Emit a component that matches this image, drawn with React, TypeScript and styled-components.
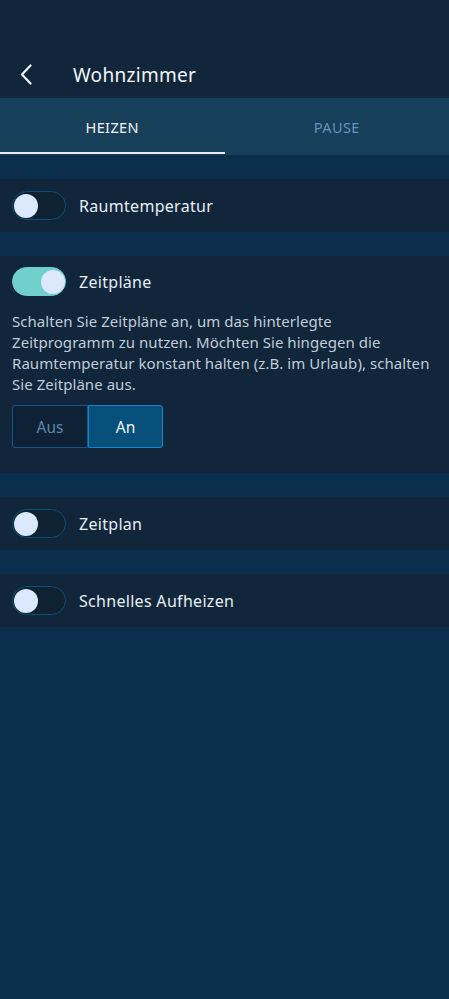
import React, { useState } from "react";
import styled, { createGlobalStyle } from "styled-components";

const Global = createGlobalStyle`
  html, body { margin: 0; padding: 0; background: #0a2e4c; }
  body { font-family: "Noto Sans", "Open Sans", sans-serif; -webkit-font-smoothing: antialiased; }
  * { box-sizing: border-box; }
`;

const Page = styled.div`
  width: 449px;
  min-height: 999px;
  background: #0a2e4c;
  display: flex;
  flex-direction: column;
`;

const Header = styled.header`
  height: 98px;
  background: #11263b;
  display: flex;
  align-items: flex-end;
  padding: 0 0 10px 20px;
`;

const BackButton = styled.button`
  width: 12px;
  height: 22px;
  padding: 0;
  border: 0;
  background: none;
  display: flex;
  align-items: center;
  margin-right: 41px;
  margin-bottom: 3px;
`;

const Title = styled.h1`
  margin: 0;
  font-size: 19px;
  font-weight: 400;
  color: #f2f5f8;
  line-height: 26px;
  letter-spacing: 0.3px;
`;

const Tabs = styled.nav`
  height: 57px;
  background: #173f59;
  display: flex;
`;

const Tab = styled.div<{ $active?: boolean }>`
  flex: 1;
  display: flex;
  align-items: center;
  justify-content: center;
  position: relative;
  font-size: 14.5px;
  letter-spacing: 0.4px;
  color: ${(p) => (p.$active ? "#f2f5f8" : "#6592b9")};
  padding-top: 1px;
  &::after {
    content: "";
    display: ${(p) => (p.$active ? "block" : "none")};
    position: absolute;
    left: 0;
    right: 0;
    bottom: 1px;
    height: 2px;
    background: #e6ecf2;
  }
`;

const List = styled.div`
  display: flex;
  flex-direction: column;
  gap: 24px;
  padding-top: 24px;
`;

const Row = styled.section`
  background: #11263a;
  min-height: 53px;
  padding: 0 12px;
  display: flex;
  align-items: center;
  gap: 13px;
`;

const Card = styled.section`
  background: #11263a;
  padding: 11px 12px 25px;
  display: flex;
  flex-direction: column;
`;

const CardHead = styled.div`
  display: flex;
  align-items: center;
  gap: 13px;
`;

const SwitchTrack = styled.button<{ $on?: boolean }>`
  width: 54px;
  height: 29px;
  border-radius: 15px;
  padding: 0;
  border: 1px solid ${(p) => (p.$on ? "#6fcfcb" : "#0d4f78")};
  background: ${(p) => (p.$on ? "#72d0cc" : "#0f2233")};
  position: relative;
  flex-shrink: 0;
  cursor: pointer;
`;

const Knob = styled.span<{ $on?: boolean }>`
  position: absolute;
  top: 2px;
  left: ${(p) => (p.$on ? "28px" : "1px")};
  width: 24px;
  height: 24px;
  border-radius: 50%;
  background: #dbe8fd;
`;

const Label = styled.span`
  font-size: 16px;
  font-weight: 400;
  color: #e8eef6;
  letter-spacing: 0.3px;
`;

const Description = styled.p`
  margin: 15px 0 0;
  font-size: 15px;
  line-height: 21px;
  color: #c0ccd9;
  letter-spacing: 0.05px;
`;

const Segmented = styled.div`
  margin-top: 10px;
  display: flex;
  width: 151px;
  height: 43px;
`;

const Segment = styled.button<{ $active?: boolean }>`
  flex: 0 0 auto;
  width: ${(p) => (p.$active ? "75px" : "76px")};
  height: 43px;
  font-family: inherit;
  font-size: 15.5px;
  border: 1px solid ${(p) => (p.$active ? "#1b84c9" : "#0f5a8a")};
  background: ${(p) => (p.$active ? "#07507c" : "#0f2134")};
  color: ${(p) => (p.$active ? "#eef3f8" : "#5a88ad")};
  border-radius: ${(p) => (p.$active ? "0 3px 3px 0" : "3px 0 0 3px")};
  padding: 0;
  cursor: pointer;
`;

function Switch({ on }: { on?: boolean }) {
  return (
    <SwitchTrack $on={on} aria-pressed={on}>
      <Knob $on={on} />
    </SwitchTrack>
  );
}

export default function App() {
  const [mode, setMode] = useState<"aus" | "an">("an");
  return (
    <Page>
      <Global />
      <Header>
        <BackButton aria-label="Zurück">
          <svg width="12" height="21" viewBox="0 0 12 21" fill="none">
            <path d="M10.5 1.5 L2 10.5 L10.5 19.5" stroke="#f2f5f8" strokeWidth="2.2" strokeLinecap="round" strokeLinejoin="round" />
          </svg>
        </BackButton>
        <Title>Wohnzimmer</Title>
      </Header>
      <Tabs>
        <Tab $active>HEIZEN</Tab>
        <Tab>PAUSE</Tab>
      </Tabs>
      <List>
        <Row>
          <Switch />
          <Label>Raumtemperatur</Label>
        </Row>
        <Card>
          <CardHead>
            <Switch on />
            <Label>Zeitpläne</Label>
          </CardHead>
          <Description>
            Schalten Sie Zeitpläne an, um das hinterlegte Zeitprogramm zu nutzen. Möchten Sie hingegen die
            Raumtemperatur konstant halten (z.B. im Urlaub), schalten Sie Zeitpläne aus.
          </Description>
          <Segmented>
            <Segment $active={mode === "aus"} onClick={() => setMode("aus")}>Aus</Segment>
            <Segment $active={mode === "an"} onClick={() => setMode("an")}>An</Segment>
          </Segmented>
        </Card>
        <Row>
          <Switch />
          <Label>Zeitplan</Label>
        </Row>
        <Row>
          <Switch />
          <Label>Schnelles Aufheizen</Label>
        </Row>
      </List>
    </Page>
  );
}
